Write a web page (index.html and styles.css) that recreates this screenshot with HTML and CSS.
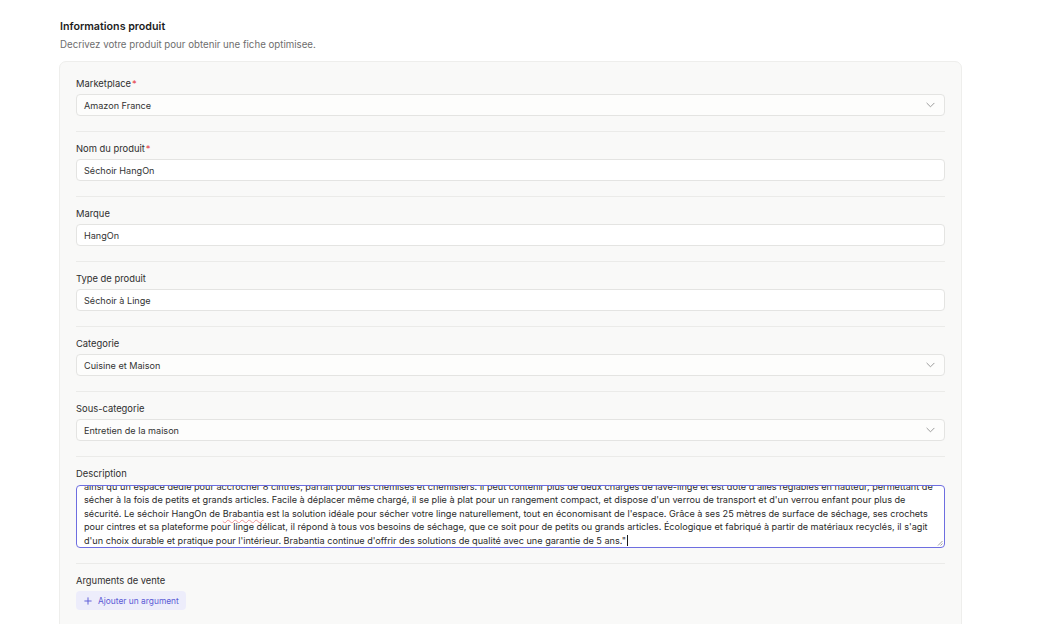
FILE: index.html
```html
<!DOCTYPE html>
<html lang="fr">
<head>
<meta charset="utf-8">
<title>Informations produit</title>
<link rel="stylesheet" href="styles.css">
</head>
<body>
<main class="page">
  <h1 class="title">Informations produit</h1>
  <p class="subtitle">Decrivez votre produit pour obtenir une fiche optimisee.</p>
  <section class="card">
    <div class="field">
      <label class="label">Marketplace<span class="req">*</span></label>
      <div class="input select">Amazon France<svg class="chev" viewBox="0 0 10 6" width="9" height="6"><path d="M1 1l4 4 4-4" fill="none" stroke="#9a9a9a" stroke-width="1.1" stroke-linecap="round" stroke-linejoin="round"/></svg></div>
    </div>
    <div class="field">
      <label class="label">Nom du produit<span class="req">*</span></label>
      <div class="input">Séchoir HangOn</div>
    </div>
    <div class="field">
      <label class="label">Marque</label>
      <div class="input">HangOn</div>
    </div>
    <div class="field">
      <label class="label">Type de produit</label>
      <div class="input">Séchoir à Linge</div>
    </div>
    <div class="field">
      <label class="label">Categorie</label>
      <div class="input select">Cuisine et Maison<svg class="chev" viewBox="0 0 10 6" width="9" height="6"><path d="M1 1l4 4 4-4" fill="none" stroke="#9a9a9a" stroke-width="1.1" stroke-linecap="round" stroke-linejoin="round"/></svg></div>
    </div>
    <div class="field">
      <label class="label">Sous-categorie</label>
      <div class="input select">Entretien de la maison<svg class="chev" viewBox="0 0 10 6" width="9" height="6"><path d="M1 1l4 4 4-4" fill="none" stroke="#9a9a9a" stroke-width="1.1" stroke-linecap="round" stroke-linejoin="round"/></svg></div>
    </div>
    <div class="field">
      <label class="label">Description</label>
      <div class="textarea">
        <div class="ta-text">
          <span class="line">ainsi qu'un espace dédié pour accrocher 8 cintres, parfait pour les chemises et chemisiers. Il peut contenir plus de deux charges de lave-linge et est doté d'ailes réglables en hauteur, permettant de</span>
          <span class="line">sécher à la fois de petits et grands articles. Facile à déplacer même chargé, il se plie à plat pour un rangement compact, et dispose d'un verrou de transport et d'un verrou enfant pour plus de</span>
          <span class="line">sécurité. Le séchoir HangOn de <span class="spell">Brabantia</span> est la solution idéale pour sécher votre linge naturellement, tout en économisant de l'espace. Grâce à ses 25 mètres de surface de séchage, ses crochets</span>
          <span class="line">pour cintres et sa plateforme pour linge délicat, il répond à tous vos besoins de séchage, que ce soit pour de petits ou grands articles. Écologique et fabriqué à partir de matériaux recyclés, il s'agit</span>
          <span class="line">d'un choix durable et pratique pour l'intérieur. <span class="spell">Brabantia</span> continue d'offrir des solutions de qualité avec une garantie de 5 ans."<span class="caret"></span></span>
        </div>
        <svg class="grip" viewBox="0 0 6 6" width="6" height="6"><path d="M5.5 1L1 5.5M5.5 3.5L3.5 5.5" stroke="#8a8a8a" stroke-width="0.8"/></svg>
      </div>
    </div>
    <div class="field last">
      <label class="label">Arguments de vente</label>
      <button class="add-btn" type="button"><svg viewBox="0 0 10 10" width="8" height="8"><path d="M5 1v8M1 5h8" stroke="#5b5bd6" stroke-width="1.2" stroke-linecap="round"/></svg>Ajouter un argument</button>
    </div>
  </section>
</main>
</body>
</html>
```

FILE: styles.css
```css
* { box-sizing: border-box; }
html, body { margin: 0; padding: 0; background: #ffffff; }
body {
  font-family: Inter, "Noto Sans", "Liberation Sans", sans-serif;
  color: #1f1f1f;
  -webkit-font-smoothing: antialiased;
}
.page {
  width: 1046px;
  height: 624px;
  overflow: hidden;
  padding: 19px 0 0 60px;
}
.title {
  margin: 0;
  font-size: 10.7px;
  line-height: 15px;
  font-weight: 600;
  color: #1c1c1c;
}
.subtitle {
  margin: 4px 0 0;
  font-size: 9.7px;
  line-height: 14px;
  color: #6e6e6e;
}
.card {
  margin: 9px 0 0 -1px;
  width: 903px;
  background: #f9f9f8;
  border: 1px solid #eeeeec;
  border-radius: 7px;
  padding: 15px 16px 30px;
}
.field {
  display: flex;
  flex-direction: column;
  gap: 3px;
  padding: 0 0 15px;
  margin-bottom: 10px;
  border-bottom: 1px solid #ebebe9;
}
.field.last { border-bottom: none; padding-bottom: 0; margin-bottom: 0; }
.label {
  font-size: 9.4px;
  line-height: 14px;
  color: #2e2e2e;
}
.req { color: #e5484d; margin-left: 1px; }
.input {
  height: 22px;
  background: #ffffff;
  border: 1px solid #e4e4e2;
  border-radius: 4px;
  padding: 0 7px;
  display: flex;
  align-items: center;
  font-size: 9.1px;
  color: #333333;
}
.select { justify-content: space-between; background: #fdfdfc; }
.chev { margin-right: 2px; }
.textarea {
  position: relative;
  height: 63px;
  margin-top: 1px;
  background: #ffffff;
  border: 1.5px solid #6e6ee0;
  border-radius: 4px;
  padding: 0 7px 0;
  overflow: hidden;
  display: flex;
  flex-direction: column;
  justify-content: flex-end;
}
.ta-text {
  display: flex;
  flex-direction: column;
  font-size: 9.15px;
  line-height: 13.5px;
  color: #2a2a2a;
}
.line { white-space: nowrap; }
.spell {
  text-decoration: underline wavy rgba(229, 72, 77, 0.55);
  text-decoration-thickness: 0.6px;
  text-underline-offset: 1.5px;
}
.caret {
  display: inline-block;
  width: 1px;
  height: 11px;
  background: #1a1a1a;
  vertical-align: -2px;
  margin-left: 1px;
}
.grip { position: absolute; right: 1px; bottom: 1px; }
.add-btn {
  align-self: flex-start;
  display: flex;
  align-items: center;
  gap: 6px;
  height: 19px;
  padding: 0 7px 0 8px;
  border: none;
  border-radius: 4px;
  background: #ededfb;
  color: #5b5bd6;
  font-family: inherit;
  font-size: 8.4px;
  cursor: pointer;
}
```
